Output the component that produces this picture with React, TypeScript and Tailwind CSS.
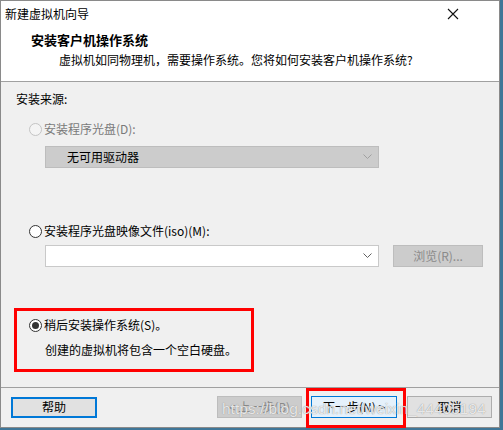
import React from "react";

const font = "font-['Microsoft_YaHei','Noto_Sans_CJK_SC',sans-serif]";

function Radio({ state }: { state: "disabled" | "off" | "on" }) {
  const border = state === "disabled" ? "border-[#c4c4c4]" : "border-[#333333]";
  const bg = state === "disabled" ? "bg-[#f4f4f4]" : "bg-white";
  return (
    <span className={`w-[13px] h-[13px] rounded-full border ${border} ${bg} flex items-center justify-center shrink-0`}>
      {state === "on" && <span className="w-[7px] h-[7px] rounded-full bg-[#333333]" />}
    </span>
  );
}

function Chevron({ color }: { color: string }) {
  return (
    <svg width="9" height="6" viewBox="0 0 9 6">
      <path d="M0.5 0.5 L4.5 4.5 L8.5 0.5" fill="none" stroke={color} strokeWidth="1" />
    </svg>
  );
}

export default function App() {
  return (
    <div className={`w-[503px] h-[430px] bg-[#3f7698] relative ${font} text-[12px] text-black`}>
      <div className="w-[500px] h-[428px] bg-[#f0f0f0] border border-[#8a8a8a] flex flex-col">
        {/* header white area */}
        <div className="bg-white h-[81px] flex flex-col border-b border-[#a0a0a0]">
          <div className="h-[26px] flex items-center justify-between pl-[4px] pr-[40px]">
            <span className="leading-[16px]">新建虚拟机向导</span>
            <svg width="12" height="12" viewBox="0 0 12 12">
              <path d="M1 1 L11 11 M11 1 L1 11" stroke="#111" strokeWidth="1.1" />
            </svg>
          </div>
          <div className="pl-[30px] mt-[5px] font-bold text-[13px] leading-[16px]">安装客户机操作系统</div>
          <div className="pl-[58px] mt-[4px] leading-[16px]">虚拟机如同物理机，需要操作系统。您将如何安装客户机操作系统?</div>
        </div>

        {/* body */}
        <div className="flex flex-col">
          <div className="mt-[8px] h-[18px] leading-[18px] pl-[15px]">安装来源:</div>

          <div className="mt-[12px] h-[18px] flex items-center pl-[28px] gap-[2px] text-[#7a7a7a]">
            <Radio state="disabled" />
            <span>安装程序光盘(D):</span>
          </div>

          <div className="mt-[8px] ml-[44px] w-[334px] h-[22px] bg-[#cccccc] border border-[#bdbdbd] flex items-center justify-between pl-[21px] pr-[6px]">
            <span>无可用驱动器</span>
            <Chevron color="#a0a0a0" />
          </div>

          <div className="mt-[54px] h-[18px] flex items-center pl-[28px] gap-[2px]">
            <Radio state="off" />
            <span>安装程序光盘映像文件(iso)(M):</span>
          </div>

          <div className="mt-[5px] h-[22px] flex items-center">
            <div className="ml-[44px] w-[334px] h-[22px] bg-white border border-[#c9c9c9] flex items-center justify-end pr-[6px]">
              <Chevron color="#606060" />
            </div>
            <div className="ml-[14px] w-[90px] h-[22px] bg-[#cccccc] border border-[#bdbdbd] flex items-center justify-center text-[#8a8a8a]">
              浏览(R)...
            </div>
          </div>

          <div className="mt-[41px] ml-[13px] w-[240px] h-[64px] border-[3px] border-[#ff0000] flex flex-col pl-[12px]">
            <div className="mt-[5px] h-[18px] flex items-center gap-[2px]">
              <Radio state="on" />
              <span>稍后安装操作系统(S)。</span>
            </div>
            <div className="mt-[7px] pl-[16px] h-[18px] leading-[18px]">创建的虚拟机将包含一个空白硬盘。</div>
          </div>

          <div className="mt-[15px] h-px bg-[#a0a0a0]" />

          <div className="mt-[8px] h-[22px] flex items-center">
            <div className="ml-[10px] w-[86px] h-[21px] bg-[#e1e1e1] border-2 border-[#0078d7] flex items-center justify-center">
              帮助
            </div>
            <div className="ml-[120px] w-[85px] h-[22px] bg-[#cccccc] border border-[#bdbdbd] flex items-center justify-center text-[#8a8a8a]">
              &lt; 上一步(B)
            </div>
            <div className="ml-[9px] w-[86px] h-[22px] bg-[#e5f1fb] border border-[#0078d7] flex items-center justify-center">
              下一步(N) &gt;
            </div>
            <div className="ml-[10px] w-[85px] h-[22px] bg-[#e1e1e1] border border-[#adadad] flex items-center justify-center">
              取消
            </div>
          </div>
        </div>
      </div>

      {/* red annotation around next button */}
      <div className="absolute left-[306px] top-[388px] w-[100px] h-[40px] border-[3px] border-[#ff0000] pointer-events-none" />

      {/* watermark */}
      <div className="absolute left-[222px] top-[400px] font-['Liberation_Sans',sans-serif] text-[15.5px] leading-[18px] text-white/80 [text-shadow:0_0_1px_rgba(110,110,110,0.9)] pointer-events-none whitespace-nowrap">
        https://blog.csdn.net/weixin_44405194
      </div>
    </div>
  );
}
